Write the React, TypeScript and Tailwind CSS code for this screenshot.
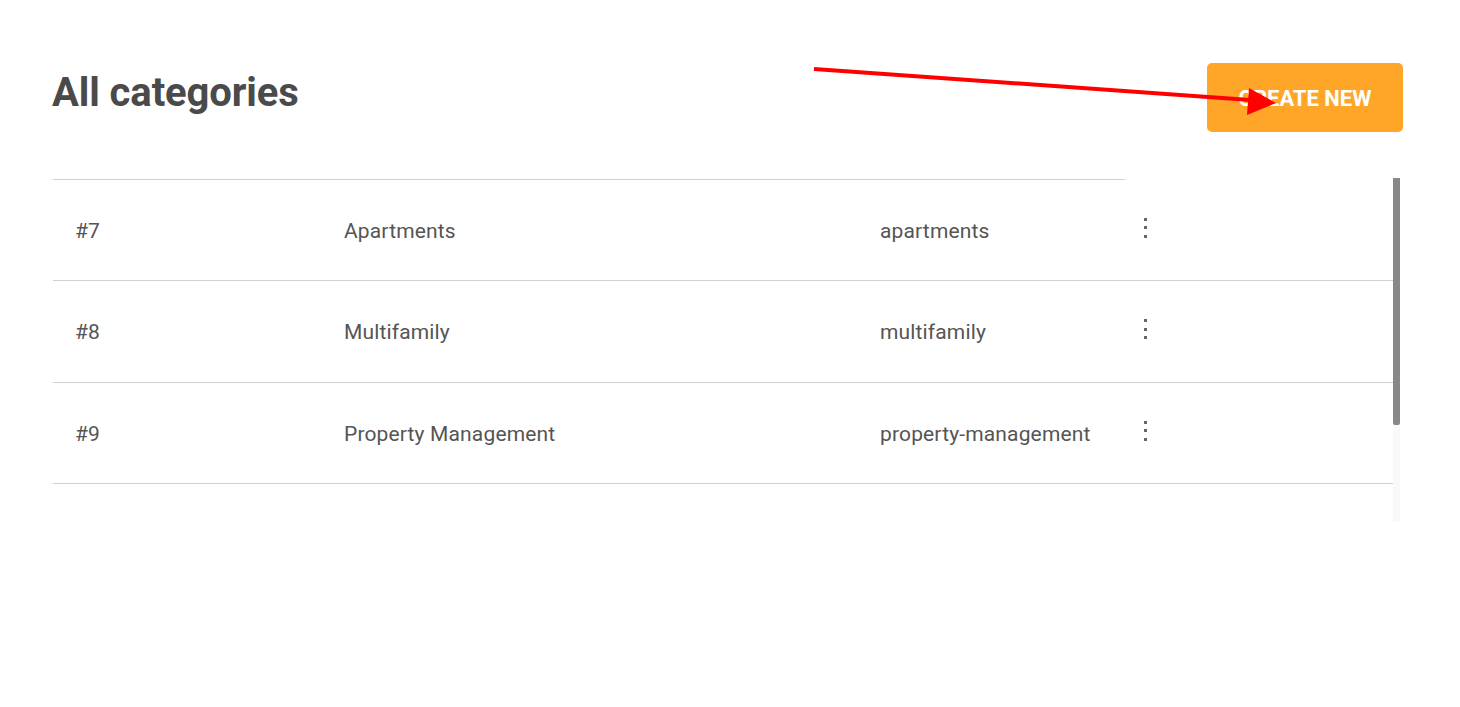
import React from "react";

const rows = [
  { id: "#7", name: "Apartments", slug: "apartments", h: "h-[101px]" },
  { id: "#8", name: "Multifamily", slug: "multifamily", h: "h-[102px]" },
  { id: "#9", name: "Property Management", slug: "property-management", h: "h-[101px]" },
];

function Kebab() {
  return (
    <div className="flex flex-col items-center gap-[5.5px] w-[3px]">
      <span className="block w-[3px] h-[3px] bg-[#666]" />
      <span className="block w-[3px] h-[3px] bg-[#666]" />
      <span className="block w-[3px] h-[3px] bg-[#666]" />
    </div>
  );
}

export default function App() {
  return (
    <div
      className="relative w-full h-[707px] bg-white overflow-hidden"
      style={{ fontFamily: "Roboto, 'Liberation Sans', sans-serif" }}
    >
      <div className="flex justify-between items-start pt-[63px] pl-[52px] pr-[57px]">
        <h1 className="mt-[7px] text-[40px] leading-[46px] font-bold text-[#4a4a4a] tracking-[-0.1px]">
          All categories
        </h1>
        <button className="w-[196px] h-[69px] rounded-[5px] bg-[#ffa629] text-white font-bold text-[22px] pt-[2px]">
          CREATE NEW
        </button>
      </div>

      <div className="flex ml-[53px] mt-[46px] w-[1347px] h-[344px]">
        <div className="w-[1340px] mt-[1px]">
          <div className="w-[1072px] border-t border-[#d0d0d0]" />
          {rows.map((r) => (
            <div
              key={r.id}
              className={`flex items-center ${r.h} border-b border-[#d0d0d0] pl-[22px] pt-[3px] text-[21px] tracking-[0.15px] text-[#555]`}
            >
              <div className="w-[269px]">{r.id}</div>
              <div className="w-[536px]">{r.name}</div>
              <div className="w-[264px]">{r.slug}</div>
              <div className="-mt-[8px]">
                <Kebab />
              </div>
            </div>
          ))}
        </div>
        <div className="w-[7px] flex flex-col">
          <div className="h-[247px] bg-[#888] rounded-b-[2px]" />
          <div className="flex-1 bg-[#f9f9f9]" />
        </div>
      </div>

      <svg
        className="absolute left-0 top-0 pointer-events-none"
        width="1460"
        height="707"
      >
        <line x1="814" y1="69" x2="1250" y2="100" stroke="#ff0000" strokeWidth="4" />
        <polygon points="1249,88 1276,103 1247,115" fill="#ff0000" />
      </svg>
    </div>
  );
}
